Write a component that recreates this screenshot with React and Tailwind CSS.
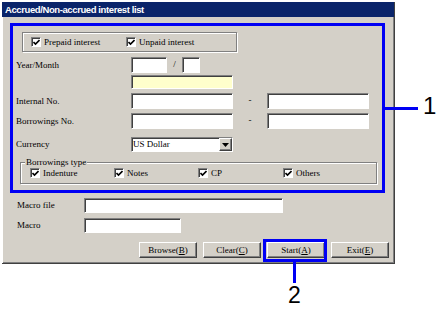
import React from "react";

const serif = "font-['Liberation_Serif','Times_New_Roman',serif]";
const sunken =
  "border border-t-[#808080] border-l-[#808080] border-b-white border-r-white shadow-[inset_1px_1px_0_#404040]";
const raised =
  "border border-t-white border-l-white border-b-[#404040] border-r-[#404040] shadow-[inset_-1px_-1px_0_#808080]";
const etched = "border border-[#808080] shadow-[inset_1px_1px_0_#fff,1px_1px_0_#fff]";

const Check = ({ label }) => (
  <div className="flex items-center gap-[3px]">
    <span className={`w-[10px] h-[10px] bg-white flex items-center justify-center ${sunken}`}>
      <svg width="7" height="7" viewBox="0 0 7 7">
        <polyline points="0.5,3 2.5,5 6.5,1" fill="none" stroke="#000" strokeWidth="1.6" />
      </svg>
    </span>
    <span className="leading-none">{label}</span>
  </div>
);

const Field = ({ w, h = "h-[16px]", bg = "bg-white" }) => (
  <div className={`${w} ${h} ${bg} ${sunken}`} />
);

const Btn = ({ children, annotate }) => (
  <div className="relative">
    <button className={`w-[58px] h-[16px] bg-[#d4d0c8] text-[9px] leading-none flex items-center justify-center ${raised}`}>
      {children}
    </button>
    {annotate && (
      <div className="absolute -left-[4px] -right-[2px] -top-[3px] -bottom-[4px] border-[3px] border-[#0000f4]" />
    )}
  </div>
);

const Row = ({ label, children, mt }) => (
  <div className={`flex items-center ${mt}`}>
    <span className="w-[118px] pl-[3px] leading-none">{label}</span>
    {children}
  </div>
);

export default function App() {
  return (
    <div className={`relative w-[448px] h-[314px] bg-white pt-[2px] pl-[2px] ${serif} text-[9px] text-black`}>
      <div className="w-[393px] h-[262px] bg-[#d4d0c8] border-r border-b border-[#404040] shadow-[inset_1px_0_0_#fff,inset_-1px_-1px_0_#808080] flex flex-col">
        <div className="h-[15px] bg-[#0a246a] text-white font-['Liberation_Sans',Arial,sans-serif] font-bold text-[9.5px] tracking-[-0.4px] leading-none flex items-center pl-[3px]">
          Accrued/Non-accrued interest list
        </div>

        <div className="mt-[6px] ml-[8px] w-[375px] h-[170px] border-[3px] border-[#0000f4]">
          <div className={`ml-[9px] mt-[6px] w-[215px] h-[20px] flex items-center pl-[8px] ${etched}`}>
            <div className="w-[95px]">
              <Check label="Prepaid interest" />
            </div>
            <Check label="Unpaid interest" />
          </div>

          <Row label="Year/Month" mt="mt-[5px]">
            <Field w="w-[36px]" />
            <span className="w-[15px] text-center">/</span>
            <Field w="w-[18px]" />
          </Row>
          <div className="mt-[2px] pl-[118px]">
            <Field w="w-[102px]" h="h-[14px]" bg="bg-[#ffffcc]" />
          </div>

          <Row label="Internal No." mt="mt-[4px]">
            <Field w="w-[102px]" />
            <span className="w-[34px] text-center">-</span>
            <Field w="w-[102px]" />
          </Row>
          <Row label="Borrowings No." mt="mt-[4px]">
            <Field w="w-[102px]" />
            <span className="w-[34px] text-center">-</span>
            <Field w="w-[102px]" />
          </Row>
          <Row label="Currency" mt="mt-[8px]">
            <div className={`w-[102px] h-[15px] bg-white flex items-center justify-between ${sunken}`}>
              <span className="pl-[1px] leading-none">US Dollar</span>
              <span className={`w-[13px] h-[13px] bg-[#d4d0c8] flex items-center justify-center ${raised}`}>
                <svg width="7" height="4" viewBox="0 0 7 4">
                  <polygon points="0,0 7,0 3.5,4" fill="#000" />
                </svg>
              </span>
            </div>
          </Row>

          <div className={`relative mt-[10px] ml-[7px] w-[357px] h-[22px] flex items-center pl-[9px] ${etched}`}>
            <span className="absolute left-[4px] -top-[5px] bg-[#d4d0c8] px-[1px] leading-none">Borrowings type</span>
            <div className="w-[84px]"><Check label="Indenture" /></div>
            <div className="w-[84px]"><Check label="Notes" /></div>
            <div className="w-[85px]"><Check label="CP" /></div>
            <div><Check label="Others" /></div>
          </div>
        </div>

        <div className="flex items-center mt-[5px] pl-[15px]">
          <span className="w-[67px] leading-none">Macro file</span>
          <Field w="w-[199px]" h="h-[15px]" />
        </div>
        <div className="flex items-center mt-[5px] pl-[15px]">
          <span className="w-[67px] leading-none">Macro</span>
          <Field w="w-[97px]" h="h-[15px]" />
        </div>

        <div className="flex justify-end gap-[6px] mt-[9px] pr-[5px]">
          <Btn>Browse(<u>B</u>)</Btn>
          <Btn>Clear(<u>C</u>)</Btn>
          <Btn annotate>Start(<u>A</u>)</Btn>
          <Btn>Exit(<u>E</u>)</Btn>
        </div>
      </div>

      {/* callouts */}
      <div className="absolute left-[385px] top-[107px] w-[33px] h-[3px] bg-[#0000f4]" />
      <span className="absolute left-[423px] top-[94px] font-['Liberation_Sans',Arial,sans-serif] text-[24px] leading-[24px]">1</span>
      <div className="absolute left-[293px] top-[261px] w-[3px] h-[22px] bg-[#0000f4]" />
      <span className="absolute left-[288px] top-[284px] font-['Liberation_Sans',Arial,sans-serif] text-[23px] leading-[23px]">2</span>
    </div>
  );
}
